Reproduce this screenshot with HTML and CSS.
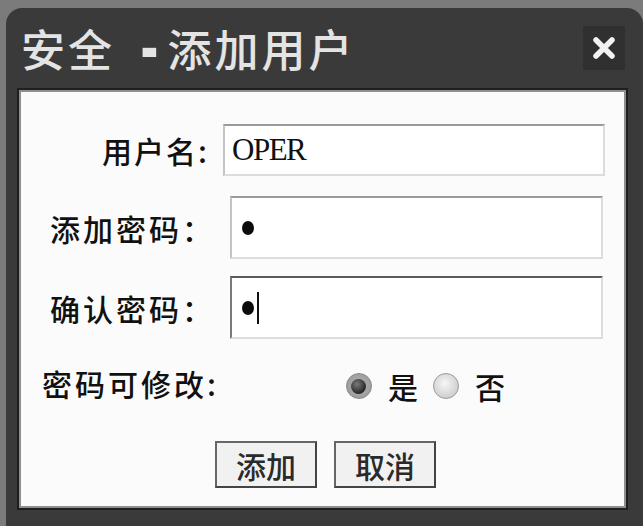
FILE: index.html
```html
<!DOCTYPE html>
<html lang="zh-CN">
<head>
    <meta charset="UTF-8">
    <meta name="viewport" content="width=device-width, initial-scale=1.0">
    <title>安全 - 添加用户</title>
    <link rel="stylesheet" href="styles.css">
</head>
<body>

    <div class="dialog">
        <div class="titlebar">
            <span class="title">安全<span class="title-dash">-</span>添加用户</span>
            <span class="close">
                <svg width="24" height="24" viewBox="0 0 24 24">
                    <path d="M4 4 L20 20 M20 4 L4 20" stroke="#f2f2f2" stroke-width="5.5" stroke-linecap="round"/>
                </svg>
            </span>
        </div>

        <div class="panel">
            <div class="row row-user">
                <label class="label">用户名:</label>
                <div class="field">OPER</div>
            </div>
            <div class="row row-pass">
                <label class="label">添加密码：</label>
                <div class="field"><span class="dot"></span></div>
            </div>
            <div class="row row-confirm">
                <label class="label">确认密码：</label>
                <div class="field focused"><span class="dot"></span><span class="caret"></span></div>
            </div>
            <div class="row row-modify">
                <label class="label">密码可修改:</label>
                <div class="choices">
                    <span class="radio checked"></span>
                    <span class="choice-text">是</span>
                    <span class="radio"></span>
                    <span class="choice-text">否</span>
                </div>
            </div>
            <div class="actions">
                <button class="btn">添加</button>
                <button class="btn">取消</button>
            </div>
        </div>
    </div>

</body>
</html>
```

FILE: styles.css
```css
body {
    margin: 0;
    background-color: #7b7b7b;
    font-family: 'Noto Sans CJK SC', sans-serif;
    overflow: hidden;
}
.dialog {
    margin: 8px 0 0 6px;
    height: 518px;
    box-sizing: border-box;
    background-color: #3a3a3a;
    border-radius: 16px 16px 0 0;
    padding: 0 15px 16px 11px;
    display: flex;
    flex-direction: column;
}
.titlebar {
    height: 80px;
    display: flex;
    align-items: center;
    justify-content: space-between;
    padding-left: 4px;
}
.title {
    font-size: 44px;
    font-weight: 500;
    line-height: 1;
    color: #e4e4e4;
    letter-spacing: 3px;
    display: flex;
    align-items: center;
}
/* thick short dash, like the bitmap font of the original */
.title-dash {
    display: inline-block;
    font-family: 'DejaVu Sans', sans-serif;
    font-weight: bold;
    font-size: 40px;
    letter-spacing: 0;
    transform: scale(1.1, 1.6);
    margin: 2px 10px 0 26px;
}
.close {
    width: 42px;
    height: 44px;
    margin-right: 3px;
    background-color: #303030;
    display: flex;
    align-items: center;
    justify-content: center;
}
.panel {
    flex: 1;
    background-color: #fbfbfb;
    border: 2px solid #1f1f1f;
    box-shadow: inset 0 0 0 2px #8f8f8f;
    padding: 34px 21px 0 23px;
}
.row {
    display: flex;
    align-items: center;
}
.label {
    font-size: 30px;
    font-weight: 500;
    letter-spacing: 3px;
    color: #111;
    flex-shrink: 0;
}
.field {
    flex: 1;
    box-sizing: border-box;
    background-color: #fff;
    border: 2px solid #dcdcdc;
    border-top-color: #9a9a9a;
    border-left-color: #c4c4c4;
    display: flex;
    align-items: center;
}
.row-user .label {
    width: 181px;
    text-align: right;
    padding-right: 14px;
    box-sizing: border-box;
    letter-spacing: 2px;
}
.row-user .field {
    height: 52px;
    padding-left: 7px;
    font-family: 'Liberation Serif', serif;
    font-size: 31px;
    letter-spacing: -1.5px;
    color: #111;
}
.row-pass {
    margin-top: 20px;
}
.row-confirm {
    margin-top: 17px;
}
.row-pass .label, .row-confirm .label {
    width: 188px;
    padding-left: 8px;
    box-sizing: border-box;
}
.row-pass .field, .row-confirm .field {
    height: 63px;
    padding-left: 10px;
    margin-right: 2px;
}
.field.focused {
    border-top-color: #5a5a5a;
    border-left-color: #7a7a7a;
}
.dot {
    width: 12px;
    height: 14px;
    border-radius: 50%;
    background-color: #0c0c0c;
}
.caret {
    width: 2px;
    height: 32px;
    margin-left: 3px;
    background-color: #111;
}
.row-modify {
    margin-top: 24px;
    height: 40px;
}
.choices {
    display: flex;
    align-items: center;
    margin-left: 127px;
    padding-top: 6px;
}
.radio {
    width: 26px;
    height: 26px;
    box-sizing: border-box;
    border-radius: 50%;
    border: 1px solid #9a9a9a;
    background: radial-gradient(circle at 45% 40%, #f6f6f6 0%, #d0d0d0 70%, #a8a8a8 100%);
    display: flex;
    align-items: center;
    justify-content: center;
}
.radio.checked::after {
    content: '';
    width: 15px;
    height: 15px;
    border-radius: 50%;
    background: radial-gradient(circle at 40% 35%, #7a7a7a 0%, #262626 70%);
}
.radio.checked {
    border-color: #888;
    background: radial-gradient(circle, #b4b4b4 0%, #959595 100%);
}
.choice-text {
    font-size: 30px;
    font-weight: 500;
    color: #111;
    margin: 0 15px 0 16px;
}
.actions {
    display: flex;
    justify-content: center;
    gap: 17px;
    margin-top: 38px;
    padding-left: 4px;
}
.btn {
    width: 102px;
    height: 47px;
    background-color: #f1f1f1;
    border: 2px solid #444;
    border-top-color: #666;
    border-left-color: #666;
    font-family: 'Noto Sans CJK SC', sans-serif;
    font-size: 30px;
    font-weight: 500;
    line-height: 1;
    color: #2a2a2a;
    padding: 0;
}
```
